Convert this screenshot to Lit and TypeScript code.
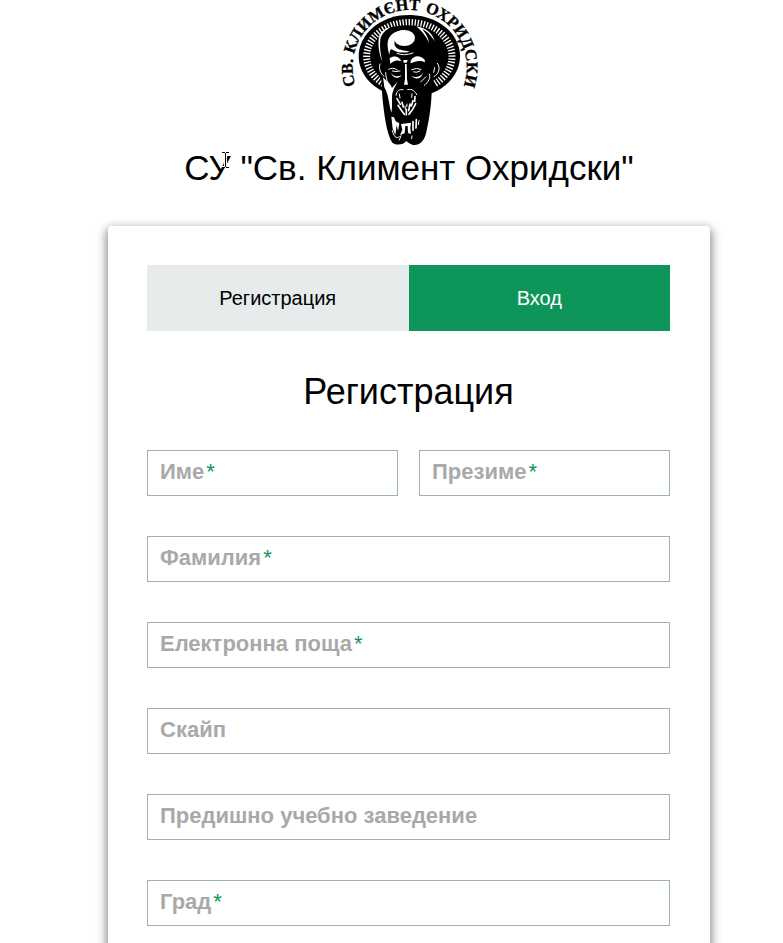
import { LitElement, html, css, svg } from "lit";
import { customElement, property } from "lit/decorators.js";

@customElement("school-logo")
class SchoolLogo extends LitElement {
  static styles = css`
    :host { display: block; width: 160px; height: 150px; }
    svg { display: block; width: 100%; height: 100%; }
    .lettering { font: bold 49px "Liberation Serif", serif; fill: #000; stroke: #000; stroke-width: 1; }
    .white { fill: #fff; }
    .line { fill: none; stroke: #fff; stroke-linecap: round; stroke-linejoin: round; }
    .thin { stroke-width: 3; }
    .mid { stroke-width: 5; }
    .rays { fill: none; stroke: #fff; stroke-width: 21; stroke-dasharray: 4 5; }
  `;

  render() {
    return html`<svg viewBox="0 0 480 450" role="img" aria-label="Св. Климент Охридски">
      ${svg`
      <defs><path id="arc" d="M80 256 A171 171 0 1 1 404 256"/></defs>
      <text class="lettering"><textPath href="#arc" startOffset="0">СВ.</textPath></text>
      <text class="lettering"><textPath href="#arc" startOffset="94">КЛИМЄНТ</textPath></text>
      <text class="lettering"><textPath href="#arc" startOffset="370">ОХРИДСКИ</textPath></text>
      <path d="M165 276 A152 124 0 1 1 308 280 Z"/>
      <path class="rays" d="M164 251 A128 102 0 1 1 318 251"/>
      <path d="M146 160 C134 110 162 84 205 78 C250 72 302 80 325 104 C352 130 342 166 338 198 C334 222 320 236 308 244 C310 300 302 352 292 396 C286 426 268 438 250 434 C240 432 236 424 231 424 C225 434 202 438 190 428 C174 404 166 350 160 290 L157 240 C147 224 144 190 146 160 Z"/>
      <ellipse class="white" cx="226" cy="114" rx="32" ry="24"/>
      <path class="white" d="M176 128 C178 106 198 92 224 90 C202 102 194 116 197 136 C205 152 222 150 242 155 C224 160 204 158 192 150 C184 144 182 152 182 164 C177 154 175 140 176 128 Z"/>
      <path class="line thin" d="M204 160 Q224 169 252 159"/>
      <path class="white" d="M262 79 C290 84 311 98 317 124 C307 108 295 94 280 88 C292 102 298 114 300 128 C290 108 278 92 262 79 Z"/>
      <path class="white" d="M150 112 C154 96 166 86 184 82 C168 92 158 102 154 118 C151 140 155 164 160 184 C150 162 146 134 150 112 Z"/>
      <path class="white" d="M182 175 C194 165 211 168 217 184 C203 179 193 182 184 192 Z"/>
      <path class="white" d="M245 182 C254 165 274 164 287 179 L288 187 C275 180 260 182 245 190 Z"/>
      <path class="white" d="M223 180 L236 180 L233 188 L224 188 Z M228 192 L233 192 L234 238 L237 254 L225 254 L228 238 Z"/>
      <path class="line thin" d="M179 208 Q190 200 205 210 M190 213 Q200 217 213 213 M248 209 Q262 202 276 208 M254 216 Q264 219 273 213"/>
      <path class="white" d="M186 219 C194 230 208 232 218 225 C210 238 192 236 186 219 Z"/>
      <path class="white" d="M282 219 C274 231 260 234 248 228 C257 239 276 239 282 219 Z"/>
      <path class="line thin" d="M153 192 C148 206 155 222 165 229 M170 218 C172 245 180 256 185 270"/>
      <path class="white" d="M162 232 C174 244 184 250 189 264 L205 246 C199 260 190 272 189 290 C189 310 190 324 187 338 C180 316 180 286 166 262 Z"/>
      <path class="line thin" d="M325 190 C336 204 329 222 315 230 M317 203 L314 217 M301 222 C306 234 298 246 286 256 M291 230 L275 246"/>
      <path class="line thin" d="M201 286 C202 272 212 267 222 269 M236 269 C250 265 258 274 263 284"/>
      <path class="line mid" d="M204 296 L214 313 M207 316 L216 329 M219 307 L223 321 M217 331 L226 343 M232 328 L232 344 M243 312 L239 332 M252 302 L247 318 M258 290 L257 304 M260 311 L251 328 M249 331 L240 343"/>
      <path class="line thin" d="M211 282 L213 294 M249 282 L248 292 M228 318 L229 328 M234 312 L233 320"/>
      <path class="white" d="M187 350 L195 352 L200 364 L211 370 L207 393 L203 375 L199 405 L191 386 Z"/>
      <path class="white" d="M216 372 L246 368 L244 384 L246 402 L237 399 L236 378 L229 378 L227 400 L213 405 L220 389 Z"/>
      <path class="line mid" d="M252 365 L252 391 M262 359 L261 384"/>
      <path class="line thin" d="M190 392 C194 409 202 418 211 410 M211 420 L216 407 M249 408 L248 416 M270 362 L268 374"/>
      `}
    </svg>`;
  }
}

@customElement("form-field")
class FormField extends LitElement {
  @property() label = "";
  @property() name = "";
  @property({ type: Boolean }) required = false;

  static styles = css`
    :host { display: block; min-width: 0; }
    .field { display: grid; height: 46px; }
    .input, .label { grid-area: 1 / 1; }
    .input {
      box-sizing: border-box; width: 100%; height: 46px; margin: 0; padding: 0 12px;
      border: 1px solid #a0b3b0; border-radius: 0; background: #fff; outline: none;
      font: 22px "Liberation Sans", Arial, sans-serif;
    }
    .label {
      z-index: 1; display: flex; gap: 2px; padding: 0 13px; pointer-events: none;
      color: #a9a9a9; font-size: 22px; font-weight: bold; line-height: 43px; white-space: nowrap;
    }
    .input:not(:placeholder-shown) + .label { visibility: hidden; }
    .star { color: #0d955a; font-weight: normal; }
  `;

  render() {
    return html`<div class="field">
      <input class="input" id="control" name=${this.name} placeholder=" " ?required=${this.required} />
      <label class="label" for="control"><span>${this.label}</span>${this.required ? html`<span class="star">*</span>` : ""}</label>
    </div>`;
  }
}

@customElement("app-root")
class AppRoot extends LitElement {
  static styles = css`
    :host {
      display: block; padding: 0 73px 0 108px; overflow: hidden; background: #fff;
      color: #000; font-family: "Liberation Sans", Arial, sans-serif;
    }
    .header { display: flex; flex-direction: column; align-items: center; padding-bottom: 40px; }
    .title { position: relative; margin: 0; font-size: 35px; font-weight: normal; line-height: 36px; white-space: nowrap; }
    .cursor { position: absolute; left: 37px; top: 2px; width: 9px; height: 16px; }
    .card {
      padding: 39px 40px 40px 39px; border-radius: 4px; background: #fff;
      box-shadow: 0 4px 10px 2px rgba(19, 35, 47, 0.5);
    }
    .tabs { display: grid; grid-template-columns: 1fr 1fr; }
    .tab {
      height: 66px; padding: 0; border: 0; background: #e7ebec; color: #000; cursor: pointer;
      font: 20px "Liberation Sans", Arial, sans-serif;
    }
    .tab.active { background: #0d955a; color: #fff; }
    .heading { margin: 40px 0 38px; font-size: 36px; font-weight: normal; line-height: 41px; text-align: center; }
    .form { display: grid; grid-template-columns: 1fr 1fr; gap: 40px 21px; }
    .wide { grid-column: 1 / -1; }
  `;

  render() {
    return html`
      <header class="header">
        <school-logo></school-logo>
        <h1 class="title">СУ "Св. Климент Охридски"
          <svg class="cursor" viewBox="0 0 9 16" aria-hidden="true">
            <path d="M1 .5H4M5 .5H8M4.5 1V15M1 15.5H4M5 15.5H8" fill="none" stroke="#fff" stroke-width="3"/>
            <path d="M1 .5H4M5 .5H8M4.5 1V15M1 15.5H4M5 15.5H8" fill="none" stroke="#000"/>
          </svg>
        </h1>
      </header>
      <main class="card">
        <nav class="tabs">
          <button class="tab" type="button">Регистрация</button>
          <button class="tab active" type="button">Вход</button>
        </nav>
        <h2 class="heading">Регистрация</h2>
        <form class="form">
          <form-field name="first" label="Име" required></form-field>
          <form-field name="middle" label="Презиме" required></form-field>
          <form-field class="wide" name="last" label="Фамилия" required></form-field>
          <form-field class="wide" name="email" label="Електронна поща" required></form-field>
          <form-field class="wide" name="skype" label="Скайп"></form-field>
          <form-field class="wide" name="school" label="Предишно учебно заведение"></form-field>
          <form-field class="wide" name="city" label="Град" required></form-field>
        </form>
      </main>
    `;
  }
}
